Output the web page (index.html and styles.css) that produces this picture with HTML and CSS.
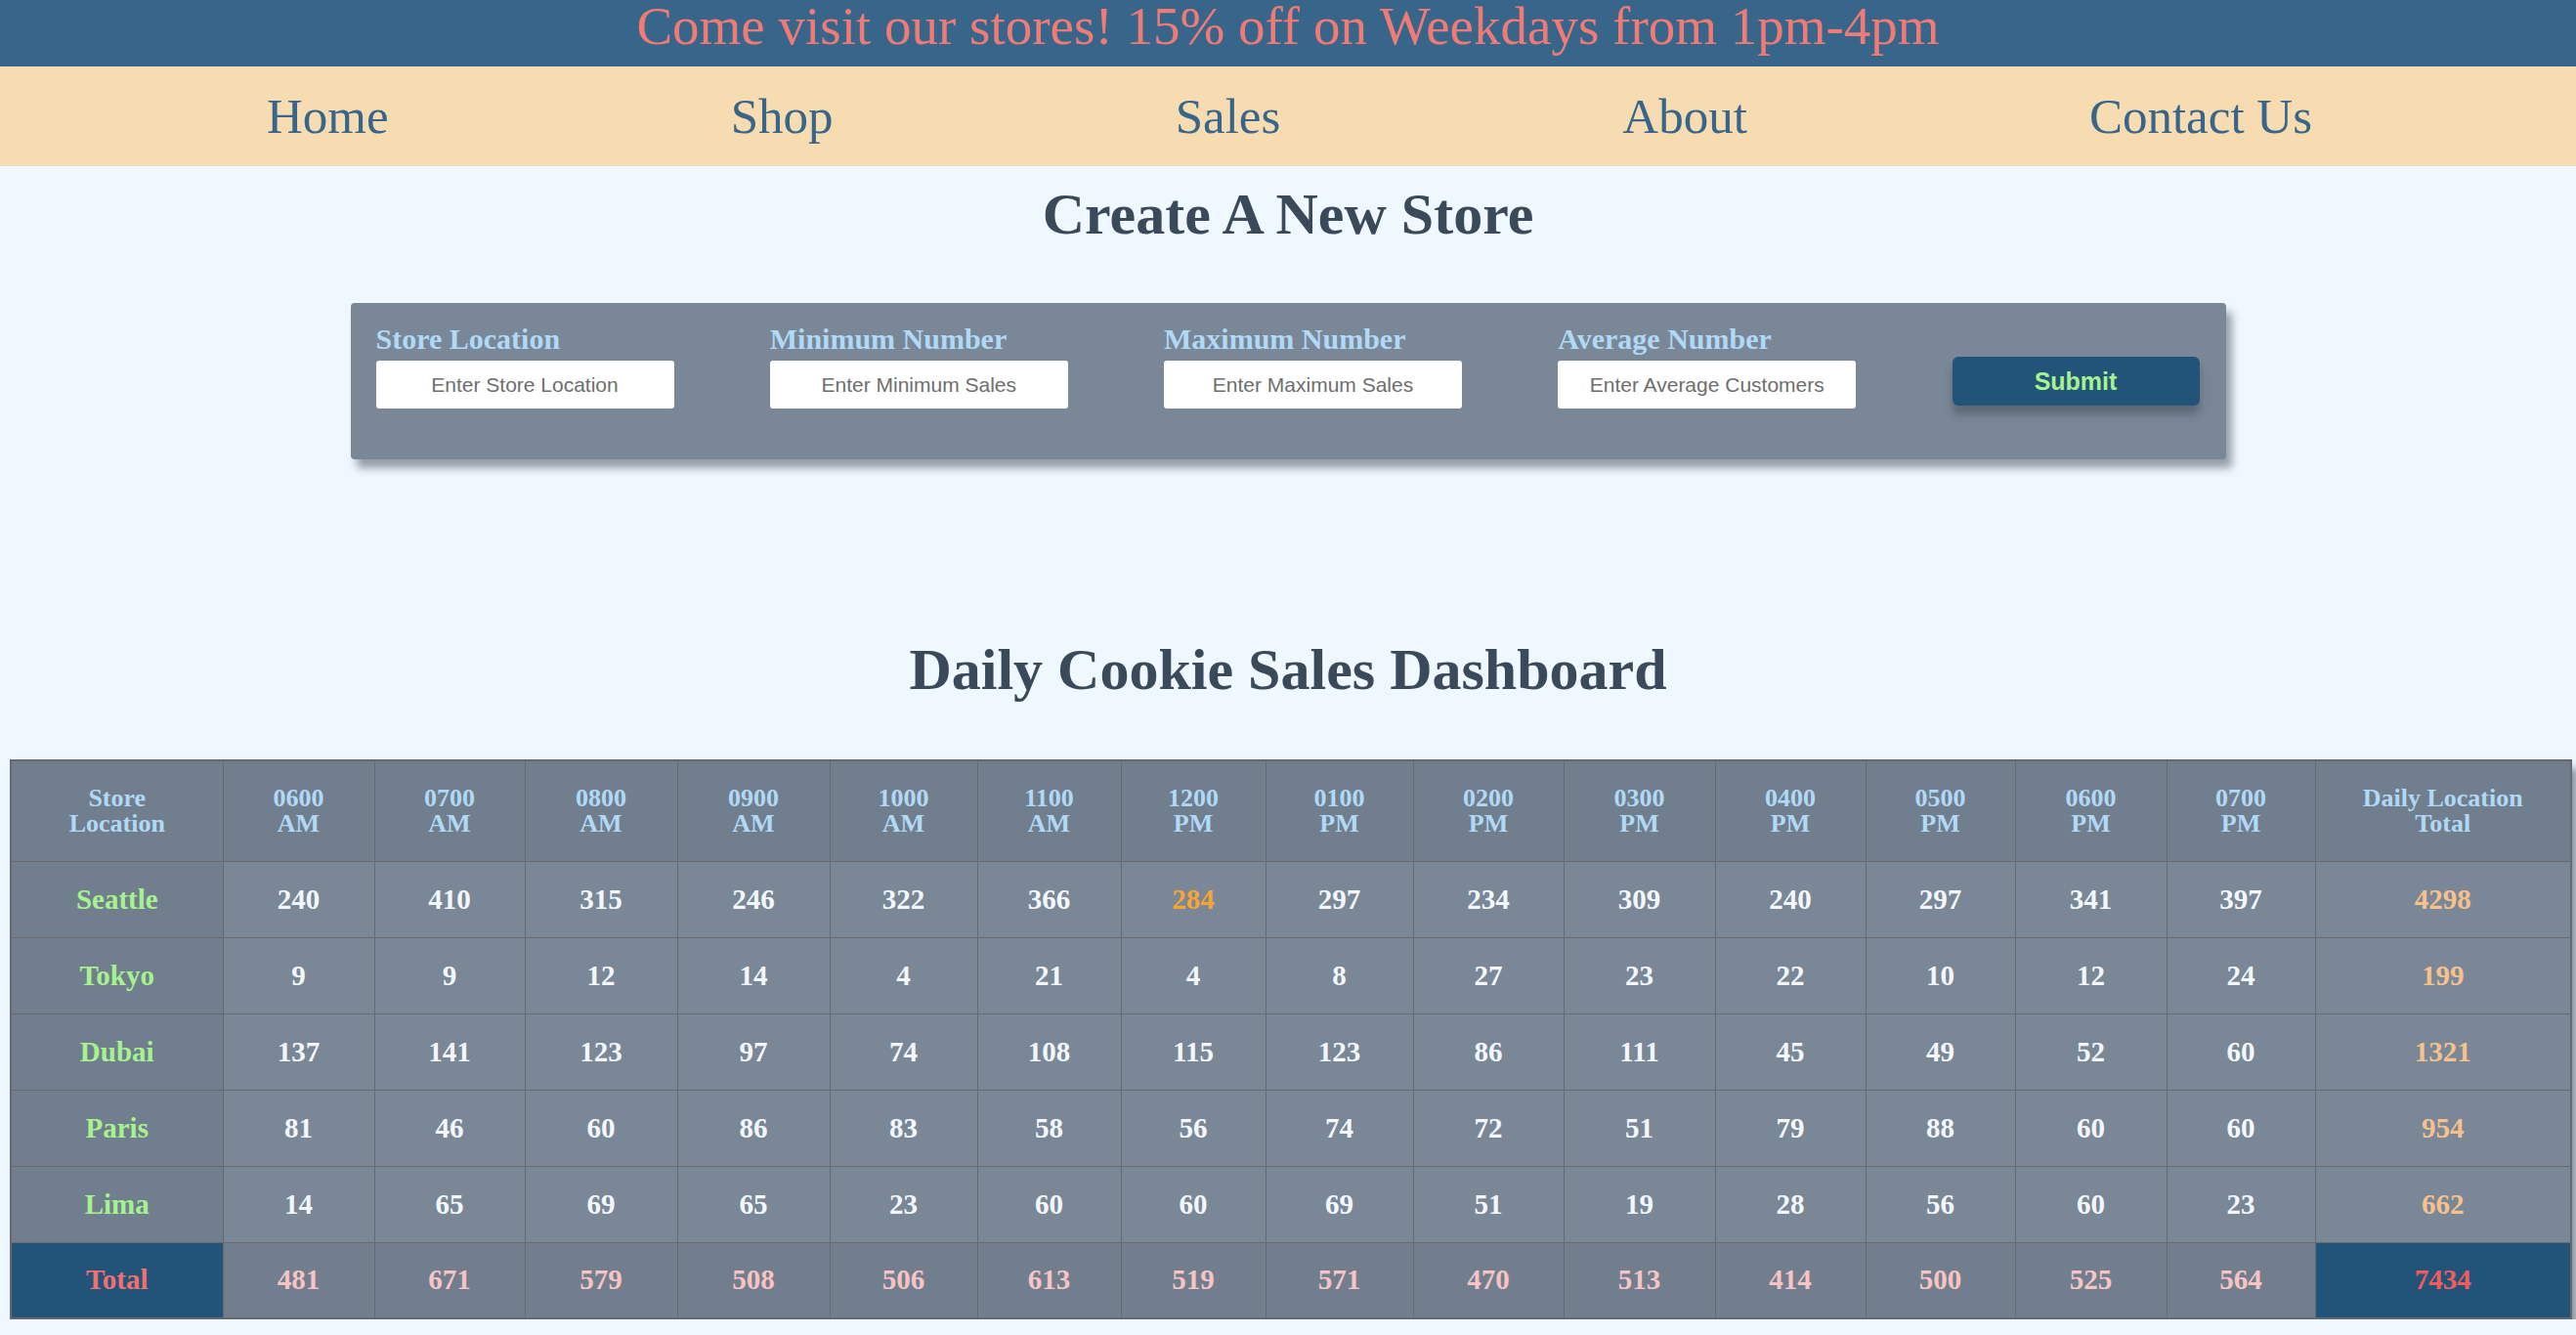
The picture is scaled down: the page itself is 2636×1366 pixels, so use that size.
FILE: index.html
```html
<!DOCTYPE html>
<html lang="en">
<head>
<meta charset="utf-8">
<title>Salmon Cookies</title>
<link rel="stylesheet" href="styles.css">
</head>
<body>
<header>
  <div class="banner">Come visit our stores! 15% off on Weekdays from 1pm-4pm</div>
  <nav class="nav">
    <a href="#">Home</a>
    <a href="#">Shop</a>
    <a href="#">Sales</a>
    <a href="#">About</a>
    <a href="#">Contact Us</a>
  </nav>
</header>
<main>
  <h1 class="title title-create">Create A New Store</h1>
  <form class="store-form">
    <div class="field">
      <label>Store Location</label>
      <input type="text" placeholder="Enter Store Location">
    </div>
    <div class="field">
      <label>Minimum Number</label>
      <input type="text" placeholder="Enter Minimum Sales">
    </div>
    <div class="field">
      <label>Maximum Number</label>
      <input type="text" placeholder="Enter Maximum Sales">
    </div>
    <div class="field">
      <label>Average Number</label>
      <input type="text" placeholder="Enter Average Customers">
    </div>
    <button type="button" class="submit">Submit</button>
  </form>

  <h2 class="title title-dash">Daily Cookie Sales Dashboard</h2>
  <table class="sales">
    <colgroup>
      <col class="w217">
      <col class="w155"><col class="w154"><col class="w156"><col class="w156"><col class="w151"><col class="w147"><col class="w148">
      <col class="w151"><col class="w154"><col class="w155"><col class="w154"><col class="w153"><col class="w155"><col class="w152">
      <col class="w262">
    </colgroup>
    <thead>
      <tr>
        <th>Store<br>Location</th>
        <th>0600<br>AM</th><th>0700<br>AM</th><th>0800<br>AM</th><th>0900<br>AM</th><th>1000<br>AM</th><th>1100<br>AM</th>
        <th>1200<br>PM</th><th>0100<br>PM</th><th>0200<br>PM</th><th>0300<br>PM</th><th>0400<br>PM</th><th>0500<br>PM</th><th>0600<br>PM</th><th>0700<br>PM</th>
        <th>Daily Location<br>Total</th>
      </tr>
    </thead>
    <tbody>
      <tr>
        <th class="store">Seattle</th>
        <td>240</td><td>410</td><td>315</td><td>246</td><td>322</td><td>366</td><td class="peak">284</td><td>297</td><td>234</td><td>309</td><td>240</td><td>297</td><td>341</td><td>397</td>
        <td class="daily">4298</td>
      </tr>
      <tr>
        <th class="store">Tokyo</th>
        <td>9</td><td>9</td><td>12</td><td>14</td><td>4</td><td>21</td><td>4</td><td>8</td><td>27</td><td>23</td><td>22</td><td>10</td><td>12</td><td>24</td>
        <td class="daily">199</td>
      </tr>
      <tr>
        <th class="store">Dubai</th>
        <td>137</td><td>141</td><td>123</td><td>97</td><td>74</td><td>108</td><td>115</td><td>123</td><td>86</td><td>111</td><td>45</td><td>49</td><td>52</td><td>60</td>
        <td class="daily">1321</td>
      </tr>
      <tr>
        <th class="store">Paris</th>
        <td>81</td><td>46</td><td>60</td><td>86</td><td>83</td><td>58</td><td>56</td><td>74</td><td>72</td><td>51</td><td>79</td><td>88</td><td>60</td><td>60</td>
        <td class="daily">954</td>
      </tr>
      <tr>
        <th class="store">Lima</th>
        <td>14</td><td>65</td><td>69</td><td>65</td><td>23</td><td>60</td><td>60</td><td>69</td><td>51</td><td>19</td><td>28</td><td>56</td><td>60</td><td>23</td>
        <td class="daily">662</td>
      </tr>
    </tbody>
    <tfoot>
      <tr>
        <th class="total-label">Total</th>
        <td>481</td><td>671</td><td>579</td><td>508</td><td>506</td><td>613</td><td>519</td><td>571</td><td>470</td><td>513</td><td>414</td><td>500</td><td>525</td><td>564</td>
        <td class="grand">7434</td>
      </tr>
    </tfoot>
  </table>
</main>
</body>
</html>
```

FILE: styles.css
```css
* {
  box-sizing: border-box;
}

html, body {
  margin: 0;
  padding: 0;
}

body {
  background: #eff7ff;
  font-family: "Liberation Serif", "Times New Roman", serif;
  overflow: hidden;
}

.banner {
  height: 68px;
  line-height: 54px;
  background: #38668a;
  color: #f07a74;
  font-size: 55px;
  text-align: center;
  white-space: nowrap;
}

.nav {
  height: 102px;
  background: #f8dcb1;
  display: flex;
  align-items: center;
  justify-content: space-between;
  padding: 0 270px 0 273px;
}

.nav a {
  color: #38668a;
  font-size: 51px;
  text-decoration: none;
  line-height: 1;
}

.title {
  margin: 0;
  text-align: center;
  color: #3b4a5a;
  font-weight: bold;
  font-size: 60px;
  line-height: 66px;
}

.title-create {
  margin-top: 16px;
}

.title-dash {
  margin-top: 182px;
}

.store-form {
  width: 1919px;
  margin: 58px auto 0;
  background: #798797;
  border-radius: 4px;
  box-shadow: 6px 9px 8px rgba(40, 50, 60, 0.45);
  display: flex;
  justify-content: space-between;
  align-items: flex-start;
  padding: 20px 27px 52px 26px;
}

.field {
  display: flex;
  flex-direction: column;
  width: 305px;
}

.field label {
  display: block;
  color: #b0d9f6;
  font-weight: bold;
  font-size: 30px;
  line-height: 33px;
  margin-bottom: 6px;
  white-space: nowrap;
}

.field input {
  width: 305px;
  height: 49px;
  border: none;
  border-radius: 3px;
  background: #ffffff;
  font-family: "Liberation Sans", Arial, sans-serif;
  font-size: 21px;
  text-align: center;
  color: #333;
  padding: 0 8px;
}

.field input::placeholder {
  color: #6e6e6e;
}

.submit {
  margin-top: 35px;
  width: 253px;
  height: 50px;
  border: none;
  border-radius: 6px;
  background: #22547a;
  color: #a6f28e;
  font-family: "Liberation Sans", Arial, sans-serif;
  font-weight: bold;
  font-size: 25px;
  box-shadow: 0 9px 9px rgba(40, 50, 60, 0.35);
}

.sales {
  margin: 59px 0 0 10px;
  width: 2621px;
  table-layout: fixed;
  border-collapse: collapse;
  border: 2px solid #666a70;
  box-shadow: 6px 9px 8px rgba(40, 50, 60, 0.5);
  font-weight: bold;
}

.w147 { width: 147px; }
.w148 { width: 148px; }
.w151 { width: 151px; }
.w152 { width: 152px; }
.w153 { width: 153px; }
.w154 { width: 154px; }
.w155 { width: 155px; }
.w156 { width: 156px; }
.w217 { width: 217px; }
.w262 { width: 262px; }

.sales th,
.sales td {
  border: 1px solid #666a70;
  text-align: center;
  vertical-align: middle;
  padding: 0;
}

.sales thead th {
  height: 103px;
  background: #717e8e;
  color: #b0d9f6;
  font-size: 26px;
  line-height: 26px;
}

.sales tbody tr,
.sales tfoot tr {
  height: 78px;
}

.sales td {
  background: #798797;
  color: #f3f7fb;
  font-size: 29px;
}

.sales th.store {
  background: #717e8e;
  color: #a6f28e;
  font-size: 29px;
}

.sales td.peak {
  color: #f5a533;
}

.sales td.daily {
  color: #f6c18d;
}

.sales tfoot td {
  background: #717e8e;
  color: #f7c3c3;
}

.sales th.total-label {
  background: #22547a;
  color: #f27070;
  font-size: 29px;
}

.sales tfoot td.grand {
  background: #22547a;
  color: #f25c5c;
}
```
